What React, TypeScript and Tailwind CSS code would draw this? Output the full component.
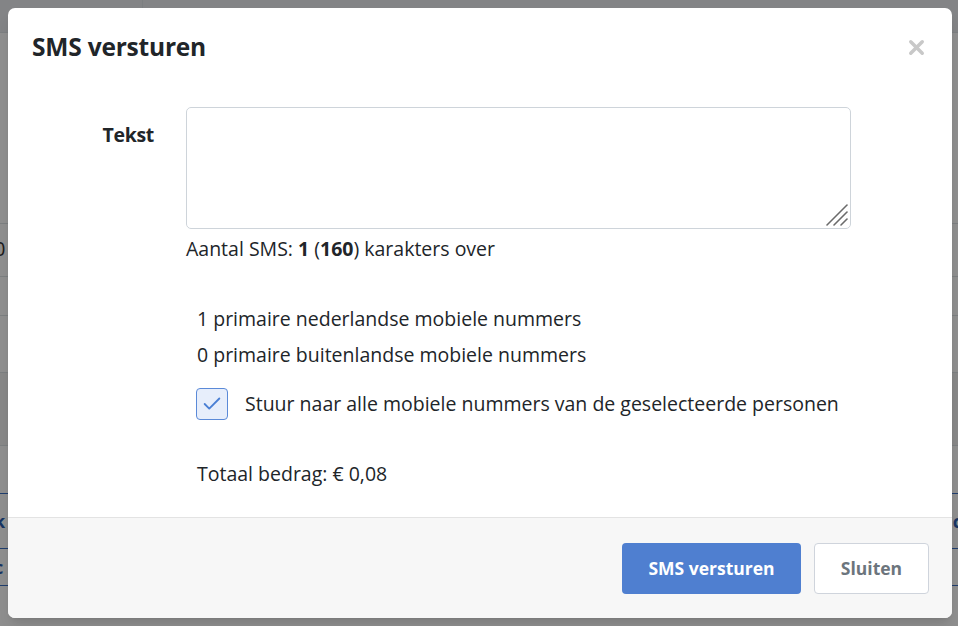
import { X, Check } from 'lucide-react';

const font = { fontFamily: '"Open Sans", "Noto Sans", sans-serif' };

const BackgroundPage = () => (
  <div className="absolute inset-0 bg-white">
    <div className="h-[33px] bg-[#e9ecef] border-b border-[#dee2e6] flex">
      <div className="w-[143px] border-r border-[#dee2e6]" />
    </div>
    <div className="h-[190px]" />
    <div className="h-[53px] border-t border-[#dee2e6] text-[20px] text-[#333] leading-[50px]">
      <span className="-ml-[6px]">0</span>
    </div>
    <div className="h-[39px] border-t border-[#dee2e6]" />
    <div className="h-[57px] border-t border-[#dee2e6]" />
    <div className="h-[73px] border-t border-[#dee2e6] bg-[#f2f2f2]" />
    <div className="h-[48px] border-t border-[#dee2e6]" />
    <div className="h-[55px] border-t border-[#3a6fc4] text-[#2a5db0] font-bold text-[18px] leading-[55px] flex justify-between">
      <span className="-ml-[6px]">k</span>
      <span className="-mr-[4px]">c</span>
    </div>
    <div className="h-[37px] border-t border-[#3a6fc4] text-[#2a5db0] font-bold text-[18px] leading-[37px]">
      <span className="-ml-[6px]">c</span>
    </div>
    <div className="border-t border-[#3a6fc4]" />
  </div>
);

const ResizeGrip = () => (
  <svg
    className="absolute right-[2px] bottom-[2px] pointer-events-none"
    width="26"
    height="26"
    viewBox="0 0 26 26"
  >
    <g stroke="#6b6b6b" strokeWidth="1.6" strokeLinecap="round">
      <line x1="24" y1="4" x2="4" y2="24" />
      <line x1="24" y1="11" x2="11" y2="24" />
      <line x1="24" y1="18" x2="18" y2="24" />
    </g>
  </svg>
);

export default function App() {
  return (
    <div className="relative w-[958px] h-[626px] overflow-hidden" style={font}>
      <BackgroundPage />
      <div className="absolute inset-0 bg-black/[0.44] p-2">
        <div className="w-[944px] h-[610px] bg-white rounded-[7px] flex flex-col text-[#212529] shadow-lg overflow-hidden">
          <div className="flex items-center justify-between pl-6 pr-[24px] pt-[20px] h-[78px] pb-[20px]">
            <h2 className="text-[24.5px] leading-[30px] font-bold tracking-[-0.2px]">SMS versturen</h2>
            <button className="text-[#c8c8c8]">
              <X size={23} strokeWidth={3.6} />
            </button>
          </div>

          <div className="flex-1 pt-[21px] text-[19.5px]">
            <div className="flex">
              <div className="w-[146px] text-right pt-[17px] leading-[22px] font-bold tracking-[-0.3px]">Tekst</div>
              <div className="ml-8 w-[665px]">
                <div className="relative">
                  <textarea className="block w-full h-[122px] border border-[#ced4da] rounded-[5px] resize-none px-3 py-2" />
                  <ResizeGrip />
                </div>
                <div className="mt-[9px] leading-[22px]">
                  Aantal SMS: <b>1</b> (<b>160</b>) karakters over
                </div>
              </div>
            </div>

            <div className="ml-[189px] mt-[48px] leading-[22px] flex flex-col">
              <div>1 primaire nederlandse mobiele nummers</div>
              <div className="mt-[14px]">0 primaire buitenlandse mobiele nummers</div>
              <label className="mt-[22px] flex items-center">
                <span className="w-[32px] h-[32px] rounded-[4px] border border-[#5b8ad8] bg-[#e7eefb] flex items-center justify-center text-[#4a7fd4] -ml-[1px]">
                  <Check size={22} strokeWidth={2} />
                </span>
                <span className="ml-[17px]">Stuur naar alle mobiele nummers van de geselecteerde personen</span>
              </label>
              <div className="mt-[43px]">Totaal bedrag: € 0,08</div>
            </div>
          </div>

          <div className="h-[101px] border-t border-[#e3e3e3] bg-[#f7f7f7] flex items-center justify-end gap-[13px] pr-[23px]">
            <button className="w-[179px] h-[51px] rounded-[4px] bg-[#4f7fd0] text-white text-[17.5px] font-bold">SMS versturen</button>
            <button className="w-[115px] h-[51px] rounded-[4px] bg-white border border-[#cfd4dc] text-[#6c757d] text-[17.5px] font-bold">Sluiten</button>
          </div>
        </div>
      </div>
    </div>
  );
}
